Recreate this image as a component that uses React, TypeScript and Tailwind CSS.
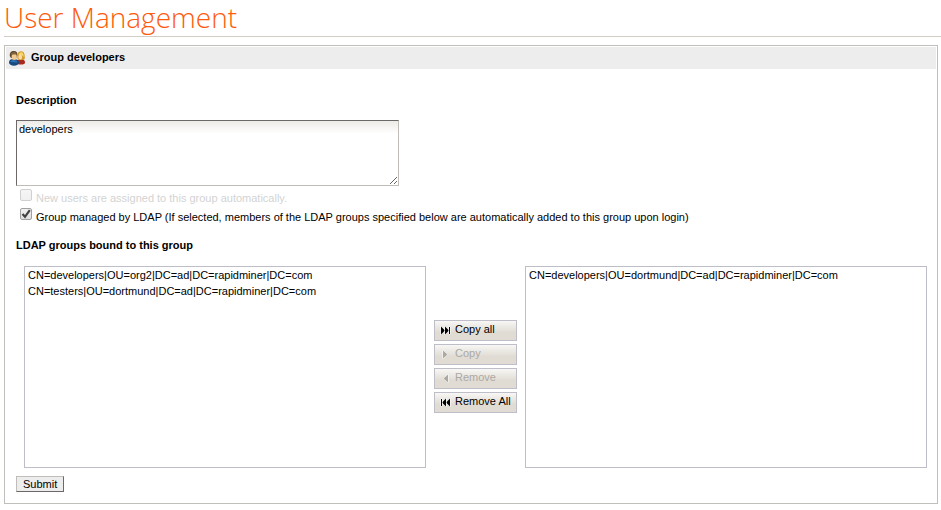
import { useState } from "react";
import type { ReactNode } from "react";

const UsersIcon = () => (
  <svg viewBox="0 0 16 16" className="h-4 w-4 shrink-0" aria-hidden="true">
    <path d="M8 13c0-3 1.500-4 4-4s4 1.500 4 3.500c0 1.500-1.500 2-4 2s-4 0-4-1.500z" fill="#a8281c" />
    <path d="M8.500 9C8 4 9 1.300 12 1.300s4 2.700 3.700 7.700l-1.700 1H10z" fill="#d39a28" />
    <path d="M9.500 5c.5-2 1.500-2.800 2.700-2.800 1.500 0 2.500 1.500 2.600 4.800L12.500 5z" fill="#f7d868" />
    <ellipse cx="11.200" cy="7" rx="1.900" ry="2.600" fill="#f8dcae" />
    <path d="M0 12.500C0 10 1.500 9 4.500 9s5.500 1 5.500 3.500c0 2-2.200 3.200-5 3.200S0 14.500 0 12.500z" fill="#174a80" />
    <path d="M1.500 12c.5-1.500 1.500-2 3-2s3.500.7 4 2.500z" fill="#2f72b4" />
    <path d="M.8 6C.5 2.500 2 1 4.800 1s4 1.500 3.500 5L7.300 8H2z" fill="#5d4426" />
    <ellipse cx="5.200" cy="6.700" rx="2.600" ry="3.300" fill="#f2cb94" />
    <path d="M1.500 5C2 3 3.300 2 5 2s2.500 1 2.500 2.500C5.500 4.500 4 4 1.500 5z" fill="#836640" />
  </svg>
);

type ArrowProps = { double?: boolean; left?: boolean };

const ArrowIcon = ({ double, left }: ArrowProps) => (
  <svg
    viewBox="0 0 11 9"
    className={`h-[9px] w-[11px] shrink-0 ${left ? "-scale-x-100" : ""}`}
    fill="currentColor"
    stroke="#fff"
    strokeWidth="1"
    paintOrder="stroke"
    aria-hidden="true"
  >
    {double ? (
      <>
        <path d="M1 0.500L5 4.500L1 8.500z" />
        <path d="M5 0.500L9 4.500L5 8.500z" />
        <path d="M9 1h1v7H9z" />
      </>
    ) : (
      <path d="M3 0.500l4.500 4L3 8.500z" />
    )}
  </svg>
);

type PickButtonProps = ArrowProps & { children: ReactNode; disabled?: boolean; onClick: () => void };

const PickButton = ({ children, disabled, onClick, ...arrow }: PickButtonProps) => (
  <button
    type="button"
    disabled={disabled}
    onClick={onClick}
    className="flex h-[21px] items-center gap-1 border border-[#bebec8] bg-linear-to-b from-[#f8f7f5] to-[#e0dcd4] to-60% pl-[5px] whitespace-nowrap text-black disabled:text-[#aca8a4]"
  >
    <ArrowIcon {...arrow} />
    <span className="pb-[3px]">{children}</span>
  </button>
);

type GroupListProps = { label: string; groups: string[]; selected: string; onSelect: (group: string) => void };

const GroupList = ({ label, groups, selected, onSelect }: GroupListProps) => (
  <ul role="listbox" aria-label={label} className="h-[202px] min-w-0 flex-1 overflow-auto border border-[#bebec8] px-[3px] leading-4">
    {groups.map((group) => (
      <li
        key={group}
        role="option"
        aria-selected={group === selected}
        onClick={() => onSelect(group)}
        className="cursor-default whitespace-nowrap aria-selected:bg-[#dfe8f6]"
      >
        {group}
      </li>
    ))}
  </ul>
);

const CHECKBOX =
  "peer h-3 w-3 appearance-none rounded-xs border border-[#a0a0a0] bg-linear-to-b from-[#f0f0f0] to-[#dedede] disabled:border-[#d0d0d0] disabled:from-[#f5f5f5] disabled:to-[#f0f0f0]";

export default function App() {
  const [available, setAvailable] = useState([
    "CN=developers|OU=org2|DC=ad|DC=rapidminer|DC=com",
    "CN=testers|OU=dortmund|DC=ad|DC=rapidminer|DC=com",
  ]);
  const [bound, setBound] = useState(["CN=developers|OU=dortmund|DC=ad|DC=rapidminer|DC=com"]);
  const [selected, setSelected] = useState("");

  const copy = (groups: string[]) => {
    setBound([...bound, ...groups]);
    setAvailable(available.filter((group) => !groups.includes(group)));
    setSelected("");
  };

  const remove = (groups: string[]) => {
    setAvailable([...available, ...groups]);
    setBound(bound.filter((group) => !groups.includes(group)));
    setSelected("");
  };

  return (
    <main className="bg-white pl-1 font-['Liberation_Sans',Arial,sans-serif] text-[11px] leading-4 text-black">
      <h1 className="mb-2 border-b border-[#d2cec4] pb-0.5 font-['Open_Sans',sans-serif] text-[28px] leading-[34px] font-light text-[#ff5a0a]">
        User Management
      </h1>
      <section className="mr-[3px] border border-[#c0bfbc] p-px">
        <header className="flex h-[22px] items-center gap-1.5 bg-[#ededed] px-[3px]">
          <UsersIcon />
          <h2 className="pb-0.5 font-bold">Group developers</h2>
        </header>
        <form className="pt-[23px] pr-[9px] pb-2.5 pl-2.5" onSubmit={(e) => e.preventDefault()}>
          <label htmlFor="description" className="block pb-3 font-bold">
            Description
          </label>
          <textarea
            id="description"
            defaultValue="developers"
            className="block h-[66px] w-[383px] max-w-full border border-t-[#6d6868] border-r-[#c0bdb8] border-b-[#c0bdb8] border-l-[#6d6868] bg-linear-to-b from-[#edebe7] to-white to-20% px-0.5"
          />
          <div className="flex h-5 items-end gap-1 pl-1">
            <div className="flex pb-[5px]">
              <input id="auto-assign" type="checkbox" disabled className={CHECKBOX} />
            </div>
            <label htmlFor="auto-assign" className="text-[#d3d3d3]">
              New users are assigned to this group automatically.
            </label>
          </div>
          <div className="flex h-[19px] items-end gap-1 pl-1">
            <div className="relative flex pb-[5px]">
              <input id="ldap" type="checkbox" defaultChecked className={CHECKBOX} />
              <svg
                viewBox="0 0 12 12"
                className="pointer-events-none invisible absolute top-0 left-0 h-3 w-3 peer-checked:visible"
                fill="none"
                stroke="#404040"
                strokeWidth="2.200"
                aria-hidden="true"
              >
                <path d="M2.500 6l2.500 2.800L9.800 2.200" />
              </svg>
            </div>
            <label htmlFor="ldap">
              Group managed by LDAP (If selected, members of the LDAP groups specified below are automatically added to
              this group upon login)
            </label>
          </div>
          <h3 className="pt-3 font-bold">LDAP groups bound to this group</h3>
          <div className="flex items-center gap-2 pt-[13px] pb-2 pl-2">
            <GroupList label="Available groups" groups={available} selected={selected} onSelect={setSelected} />
            <div className="flex w-[83px] flex-col gap-[3px] pb-px">
              <PickButton double onClick={() => copy(available)}>
                Copy all
              </PickButton>
              <PickButton disabled={!available.includes(selected)} onClick={() => copy([selected])}>
                Copy
              </PickButton>
              <PickButton left disabled={!bound.includes(selected)} onClick={() => remove([selected])}>
                Remove
              </PickButton>
              <PickButton double left onClick={() => remove(bound)}>
                Remove All
              </PickButton>
            </div>
            <GroupList label="Bound groups" groups={bound} selected={selected} onSelect={setSelected} />
          </div>
          <button
            type="submit"
            className="block h-4 border border-t-[#c0bdb8] border-r-[#6d6868] border-b-[#6d6868] border-l-[#c0bdb8] bg-[#ededed] px-1.5 leading-3.5"
          >
            Submit
          </button>
        </form>
      </section>
    </main>
  );
}
